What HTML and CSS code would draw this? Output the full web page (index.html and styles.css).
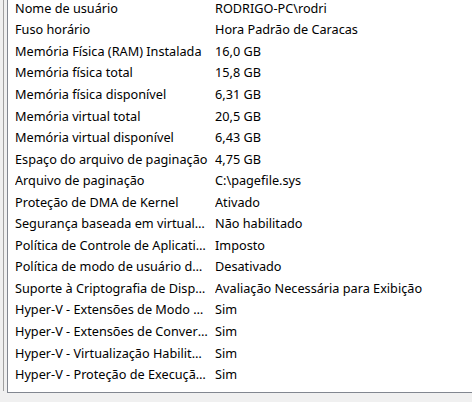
FILE: index.html
```html
<!DOCTYPE html>
<html lang="pt-BR">
<head>
<meta charset="utf-8">
<link rel="stylesheet" href="styles.css">
</head>
<body>
<div class="pane">
  <div class="listbox">
    <div class="list">
      <div class="row"><span class="k">Nome de usuário</span><span class="v">RODRIGO-PC\rodri</span></div>
      <div class="row"><span class="k">Fuso horário</span><span class="v">Hora Padrão de Caracas</span></div>
      <div class="row"><span class="k">Memória Física (RAM) Instalada</span><span class="v">16,0 GB</span></div>
      <div class="row"><span class="k">Memória física total</span><span class="v">15,8 GB</span></div>
      <div class="row"><span class="k">Memória física disponível</span><span class="v">6,31 GB</span></div>
      <div class="row"><span class="k">Memória virtual total</span><span class="v">20,5 GB</span></div>
      <div class="row"><span class="k">Memória virtual disponível</span><span class="v">6,43 GB</span></div>
      <div class="row"><span class="k">Espaço do arquivo de paginação</span><span class="v">4,75 GB</span></div>
      <div class="row"><span class="k">Arquivo de paginação</span><span class="v">C:\pagefile.sys</span></div>
      <div class="row"><span class="k">Proteção de DMA de Kernel</span><span class="v">Ativado</span></div>
      <div class="row"><span class="k">Segurança baseada em virtualização</span><span class="v">Não habilitado</span></div>
      <div class="row"><span class="k">Política de Controle de Aplicativos</span><span class="v">Imposto</span></div>
      <div class="row"><span class="k">Política de modo de usuário do controle</span><span class="v">Desativado</span></div>
      <div class="row"><span class="k">Suporte à Criptografia de Dispositivo</span><span class="v">Avaliação Necessária para Exibição</span></div>
      <div class="row"><span class="k">Hyper-V - Extensões de Modo de Monitor</span><span class="v">Sim</span></div>
      <div class="row"><span class="k">Hyper-V - Extensões de Conversão de Endereços</span><span class="v">Sim</span></div>
      <div class="row"><span class="k">Hyper-V - Virtualização Habilitada no Firmware</span><span class="v">Sim</span></div>
      <div class="row"><span class="k">Hyper-V - Proteção de Execução de Dados</span><span class="v">Sim</span></div>
    </div>
  </div>
</div>
</body>
</html>
```

FILE: styles.css
```css
html, body {
  margin: 0;
  padding: 0;
  background: #f0f0f0;
  width: 472px;
  height: 402px;
  overflow: hidden;
}

.pane {
  margin-left: 3px;
  border-left: 1px solid #a0a0a0;
  height: 391px;
  padding-left: 3px;
}

.listbox {
  background: #ffffff;
  border-left: 1px solid #828790;
  border-bottom: 1px solid #828790;
  height: 392px;
  overflow: hidden;
}

.list {
  margin-top: -3px;
  padding-left: 7px;
  font-family: "Noto Sans", "Open Sans", sans-serif;
  font-size: 12.7px;
  color: #000000;
}

.row {
  display: grid;
  grid-template-columns: 200px 1fr;
  height: 21.55px;
  align-items: center;
  white-space: nowrap;
}

.k {
  overflow: hidden;
  text-overflow: ellipsis;
  padding-right: 7px;
}

.v {
  overflow: hidden;
}
```
